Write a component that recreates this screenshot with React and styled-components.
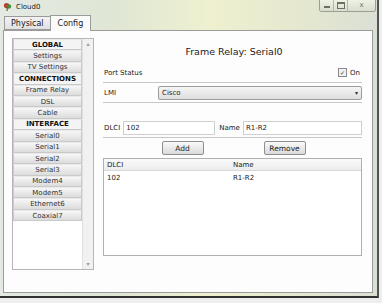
import React from "react";
import styled, { createGlobalStyle } from "styled-components";

const Global = createGlobalStyle`
  html, body { margin: 0; padding: 0; }
  body {
    width: 382px;
    height: 303px;
    overflow: hidden;
    font-family: "DejaVu Sans", Tahoma, sans-serif;
    background: #eeeeee;
  }
`;

const sidebarItems = [
  { label: "GLOBAL", head: true },
  { label: "Settings" },
  { label: "TV Settings" },
  { label: "CONNECTIONS", head: true },
  { label: "Frame Relay" },
  { label: "DSL" },
  { label: "Cable" },
  { label: "INTERFACE", head: true },
  { label: "Serial0" },
  { label: "Serial1" },
  { label: "Serial2" },
  { label: "Serial3" },
  { label: "Modem4" },
  { label: "Modem5" },
  { label: "Ethernet6" },
  { label: "Coaxial7" },
];

export default function App() {
  return (
    <>
      <Global />
      <Window>
        <TitleBar>
          <CloudIcon width="9" height="9" viewBox="0 0 10 10">
            <circle cx="4" cy="4" r="3" fill="#c0392b" />
            <circle cx="6.5" cy="5" r="2.6" fill="#3f8f3a" />
            <rect x="4" y="6" width="1.2" height="4" fill="#6b4a2a" />
          </CloudIcon>
          <Title>Cloud0</Title>
          <Controls>
            <CtrlButton>
              <MinGlyph />
            </CtrlButton>
            <CtrlButton>
              <MaxGlyph />
            </CtrlButton>
            <CtrlButton wide>
              <CloseGlyph>x</CloseGlyph>
            </CtrlButton>
          </Controls>
        </TitleBar>

        <Client>
          <Tabs>
            <Tab>Physical</Tab>
            <Tab active>Config</Tab>
          </Tabs>

          <Panel>
            <Sidebar>
              <SideList>
                {sidebarItems.map((it) => (
                  <SideItem key={it.label} head={it.head}>
                    {it.label}
                  </SideItem>
                ))}
              </SideList>
              <Scrollbar>
                <Arrow>▴</Arrow>
                <Arrow>▾</Arrow>
              </Scrollbar>
            </Sidebar>

            <Main>
              <Heading>Frame Relay: Serial0</Heading>

              <Row>
                <Label>Port Status</Label>
                <CheckWrap>
                  <Check>✓</Check>
                  <span>On</span>
                </CheckWrap>
              </Row>
              <Rule />

              <Row>
                <Label w="54px">LMI</Label>
                <Select>
                  <span>Cisco</span>
                  <Caret>▾</Caret>
                </Select>
              </Row>
              <Rule />

              <DlciRow>
                <Label>DLCI</Label>
                <Input w="92px">102</Input>
                <Label>Name</Label>
                <Input grow>R1-R2</Input>
              </DlciRow>
              <Rule />

              <ButtonRow>
                <Button>Add</Button>
                <Button>Remove</Button>
              </ButtonRow>

              <Table>
                <HeadRow>
                  <Cell w="123px">DLCI</Cell>
                  <Cell>Name</Cell>
                </HeadRow>
                <BodyRow>
                  <Cell w="123px">102</Cell>
                  <Cell>R1-R2</Cell>
                </BodyRow>
              </Table>
            </Main>
          </Panel>
        </Client>
      </Window>
    </>
  );
}

const Window = styled.div`
  width: 379px;
  height: 298px;
  display: flex;
  flex-direction: column;
  background: linear-gradient(
    90deg,
    #e4e9e4 0%,
    #dfe6d4 30%,
    #eef0cf 55%,
    #e5e8cf 80%,
    #dadfd6 100%
  );
  border-right: 2px solid #4f5450;
  border-bottom: 2px solid #2f3230;
  box-sizing: border-box;
`;

const TitleBar = styled.div`
  height: 13px;
  display: flex;
  align-items: center;
  padding-left: 3px;
  gap: 4px;
`;

const CloudIcon = styled.svg`
  flex: none;
`;

const Title = styled.span`
  font-size: 7px;
  color: #1c1c1c;
`;

const Controls = styled.div`
  margin-left: auto;
  margin-right: 1px;
  align-self: flex-start;
  display: flex;
  border: 1px solid #9a9f94;
  border-top: none;
  border-radius: 0 0 3px 3px;
  overflow: hidden;
`;

const CtrlButton = styled.div`
  width: ${(p) => (p.wide ? "27px" : "13px")};
  height: 11px;
  display: flex;
  align-items: center;
  justify-content: center;
  background: linear-gradient(#eef1e6, #d9ddcf);
  border-left: 1px solid #b2b7aa;
  &:first-child { border-left: none; }
`;

const MinGlyph = styled.div`
  width: 6px;
  height: 2px;
  margin-top: 3px;
  background: #6b6f66;
`;

const MaxGlyph = styled.div`
  width: 6px;
  height: 4px;
  border: 1px solid #6b6f66;
  border-top-width: 2px;
`;

const CloseGlyph = styled.span`
  font-size: 7px;
  color: #6b6f66;
  line-height: 1;
`;

const Client = styled.div`
  flex: 1;
  display: flex;
  flex-direction: column;
  padding: 1px 4px 3px 3px;
`;

const Tabs = styled.div`
  display: flex;
  align-items: flex-end;
  height: 16px;
  padding-left: 1px;
`;

const Tab = styled.div`
  height: ${(p) => (p.active ? "16px" : "14px")};
  padding: 0 ${(p) => (p.active ? "7px" : "6px")};
  display: flex;
  align-items: center;
  font-size: 8px;
  color: #1a1a1a;
  background: ${(p) => (p.active ? "#fbfbfb" : "linear-gradient(#f3f3f3, #e1e1e1)")};
  border: 1px solid #9b9b9b;
  border-bottom: ${(p) => (p.active ? "none" : "1px solid #9b9b9b")};
  margin-left: ${(p) => (p.active ? "-1px" : "0")};
  box-sizing: border-box;
  margin-bottom: ${(p) => (p.active ? "-1px" : "0")};
  position: relative;
  z-index: ${(p) => (p.active ? 1 : 0)};
`;

const Panel = styled.div`
  flex: 1;
  display: flex;
  gap: 9px;
  padding: 7px 10px 0 8px;
  background: #fdfdfd;
  border: 1px solid #9b9b9b;
`;

const Sidebar = styled.div`
  width: 80px;
  height: 230px;
  display: flex;
  border: 1px solid #b5b5b5;
  background: #fff;
  flex: none;
`;

const SideList = styled.div`
  width: 69px;
  display: flex;
  flex-direction: column;
`;

const SideItem = styled.div`
  height: 11.4px;
  box-sizing: border-box;
  display: flex;
  align-items: center;
  justify-content: center;
  font-size: 7px;
  font-weight: ${(p) => (p.head ? 700 : 400)};
  color: ${(p) => (p.head ? "#111" : "#333")};
  background: ${(p) =>
    p.head ? "#f4f4f4" : "linear-gradient(#f7f7f7, #dcdcdc)"};
  border: 1px solid #c9c9c9;
  border-top-color: #e9e9e9;
`;

const Scrollbar = styled.div`
  flex: 1;
  display: flex;
  flex-direction: column;
  justify-content: space-between;
  align-items: center;
  background: #f1f1f1;
  border-left: 1px solid #e0e0e0;
  padding: 2px 0;
`;

const Arrow = styled.span`
  font-size: 6px;
  color: #999;
  line-height: 1;
`;

const Main = styled.div`
  flex: 1;
  display: flex;
  flex-direction: column;
  padding-top: 8px;
`;

const Heading = styled.div`
  text-align: center;
  font-size: 9.5px;
  color: #222;
  margin-bottom: 6px;
  padding-left: 3px;
`;

const Row = styled.div`
  display: flex;
  align-items: center;
  height: 19px;
  font-size: 7px;
  color: #222;
`;

const Label = styled.span`
  width: ${(p) => p.w || "auto"};
  flex: none;
  font-size: 7px;
  color: #222;
  padding-left: 1px;
`;

const CheckWrap = styled.div`
  margin-left: auto;
  margin-right: 2px;
  display: flex;
  align-items: center;
  gap: 3px;
`;

const Check = styled.span`
  width: 7px;
  height: 7px;
  border: 1px solid #8a8a8a;
  background: #eef0f6;
  font-size: 6px;
  line-height: 7px;
  text-align: center;
  color: #333;
`;

const Rule = styled.div`
  height: 1px;
  background: #c8c8c8;
`;

const Select = styled.div`
  flex: 1;
  height: 14px;
  box-sizing: border-box;
  display: flex;
  align-items: center;
  padding: 0 3px;
  font-size: 7px;
  border: 1px solid #9d9d9d;
  border-radius: 2px;
  background: linear-gradient(#f5f5f5, #dedede);
`;

const Caret = styled.span`
  margin-left: auto;
  font-size: 6px;
  color: #333;
`;

const DlciRow = styled.div`
  display: flex;
  align-items: center;
  gap: 3px;
  margin-top: 16px;
  height: 18px;
`;

const Input = styled.div`
  width: ${(p) => p.w || "auto"};
  flex: ${(p) => (p.grow ? 1 : "none")};
  height: 14px;
  box-sizing: border-box;
  display: flex;
  align-items: center;
  padding: 0 2px;
  font-size: 7px;
  color: #222;
  border: 1px solid #cfcfcf;
  background: #fff;
`;

const ButtonRow = styled.div`
  display: flex;
  gap: 60px;
  justify-content: center;
  padding: 3px 0 3px 2px;
`;

const Button = styled.div`
  width: 42px;
  height: 14px;
  box-sizing: border-box;
  display: flex;
  align-items: center;
  justify-content: center;
  font-size: 7.5px;
  color: #222;
  border: 1px solid #8f8f8f;
  border-radius: 2px;
  background: linear-gradient(#fafafa, #dadada);
`;

const Table = styled.div`
  height: 98px;
  box-sizing: border-box;
  border: 1px solid #b0b0b0;
  background: #fff;
  display: flex;
  flex-direction: column;
`;

const HeadRow = styled.div`
  display: flex;
  height: 11px;
  align-items: center;
  background: linear-gradient(#fafafa, #ececec);
  border-bottom: 1px solid #d8d8d8;
  font-size: 7px;
`;

const BodyRow = styled.div`
  display: flex;
  height: 13px;
  align-items: center;
  font-size: 7px;
`;

const Cell = styled.span`
  width: ${(p) => p.w || "auto"};
  padding-left: 3px;
  color: #222;
`;
